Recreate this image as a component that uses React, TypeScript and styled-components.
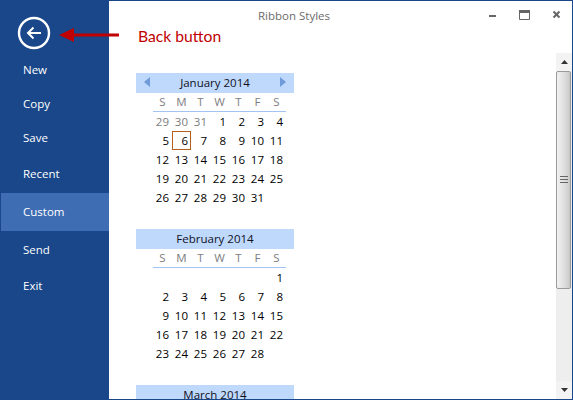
import * as React from 'react'
import styled, { createGlobalStyle } from 'styled-components'

const GlobalStyle = createGlobalStyle`
    html, body {
        margin: 0;
        padding: 0;
        background: #fff;
        overflow: hidden;
    }
`

const Window = styled.div`
    width: 573px;
    height: 400px;
    box-sizing: border-box;
    display: flex;
    overflow: hidden;
    position: relative;
    background: #fff;
    border: 1px solid #19478a;
    border-left: none;
    font-family: 'Open Sans', 'Noto Sans', sans-serif;
    font-size: 11.5px;
`

const Sidebar = styled.nav`
    width: 109px;
    flex: none;
    display: flex;
    flex-direction: column;
    background: #19478a;
    color: #fff;
`

const BackRow = styled.div`
    height: 51px;
    padding: 15px 0 0 17px;
    box-sizing: border-box;
    flex: none;
`

const NavItem = styled.div<{ $h: number; $active?: boolean }>`
    height: ${(p) => p.$h}px;
    box-sizing: border-box;
    flex: none;
    margin-left: 1px;
    padding-left: 22px;
    padding-bottom: ${(p) => (p.$active ? 2 : 0)}px;
    display: flex;
    align-items: center;
    background: ${(p) => (p.$active ? '#3f6db3' : 'transparent')};
`

const Main = styled.div`
    flex: 1;
    min-width: 0;
    display: flex;
    flex-direction: column;
`

const TitleBar = styled.div`
    height: 52px;
    flex: none;
    display: flex;
    align-items: flex-start;
    padding-left: 149px;
`

const Title = styled.div`
    padding-top: 7px;
    color: #6b6b6b;
`

const Caption = styled.div`
    margin-left: auto;
    display: flex;
    gap: 20px;
    padding: 8px 9px 0 0;
`

const CaptionButton = styled.svg`
    width: 12px;
    height: 12px;
    display: block;
`

const Annotation = styled.div`
    position: absolute;
    left: 59px;
    top: 24px;
    display: flex;
    align-items: center;
    gap: 19px;
    color: #c00000;
    font-family: Lato, 'Open Sans', sans-serif;
    font-size: 15.7px;
    line-height: 22px;
    svg {
        display: block;
    }
`

const Content = styled.div`
    flex: 1;
    min-height: 0;
    display: flex;
`

const Calendars = styled.div`
    flex: 1;
    padding: 20px 0 0 27px;
    display: flex;
    flex-direction: column;
    gap: 22px;
    overflow: hidden;
`

const Month = styled.section`
    width: 158px;
    flex: none;
`

const MonthHeader = styled.div`
    height: 20px;
    box-sizing: border-box;
    display: flex;
    align-items: center;
    justify-content: space-between;
    padding: 0 8px 2px;
    background: #bfd9fd;
    color: #10101c;
`

const MonthName = styled.span`
    flex: 1;
    text-align: center;
`

const Arrow = styled.svg`
    width: 6px;
    height: 10px;
    flex: none;
`

const Grid = styled.div`
    width: 133px;
    margin-left: 17px;
    display: grid;
    grid-template-columns: repeat(7, 19px);
    grid-auto-rows: 19px;
    line-height: 19px;
`

const WeekRow = styled(Grid)`
    height: 18px;
    grid-auto-rows: 18px;
    line-height: 18px;
    border-bottom: 1px solid #a3c4f2;
`

const WeekDay = styled.span`
    text-align: center;
    color: #7d7d7d;
`

const Day = styled.span<{ $muted?: boolean; $today?: boolean }>`
    text-align: right;
    padding-right: 3px;
    box-sizing: border-box;
    color: ${(p) => (p.$muted ? '#7d7d7d' : '#000')};
    ${(p) => p.$today && 'border: 1px solid #b5601e; line-height: 17px; padding-right: 2px;'}
`

const ScrollTrack = styled.div`
    width: 16px;
    flex: none;
    display: flex;
    flex-direction: column;
    background: #eeeeee;
`

const ScrollEnd = styled.div`
    flex: none;
    height: 18px;
    display: flex;
    align-items: center;
    justify-content: center;
    background: #f3f3f3;
`

const ScrollSpace = styled.div`
    flex: 1;
`

const Thumb = styled.div`
    flex: none;
    width: 15px;
    height: 218px;
    box-sizing: border-box;
    border: 1px solid #9a9a9a;
    border-radius: 2px;
    background: linear-gradient(to right, #f2f2f2, #dcdcdc 60%, #c8c8c8);
    display: flex;
    align-items: center;
    justify-content: center;
`

const Gripper = styled.svg`
    width: 8px;
    height: 8px;
    display: block;
`

const WEEK = ['S', 'M', 'T', 'W', 'T', 'F', 'S']
const NAV = [
    { label: 'New', h: 34 },
    { label: 'Copy', h: 34 },
    { label: 'Save', h: 34 },
    { label: 'Recent', h: 39 },
    { label: 'Custom', h: 38, active: true },
    { label: 'Send', h: 36 },
    { label: 'Exit', h: 36 }
]

type Cell = { n?: number; muted?: boolean; today?: boolean }

const range = (from: number, to: number, muted = false): Cell[] =>
    Array.from({ length: to - from + 1 }, (_, i) => ({ n: from + i, muted }))

const MONTHS: { name: string; arrows?: boolean; cells: Cell[] }[] = [
    {
        name: 'January 2014',
        arrows: true,
        cells: [...range(29, 31, true), ...range(1, 31)].map((c) =>
            c.n === 6 && !c.muted ? { ...c, today: true } : c
        )
    },
    {
        name: 'February 2014',
        cells: [...Array.from({ length: 6 }, () => ({})), ...range(1, 28)]
    },
    { name: 'March 2014', cells: [] }
]

const App: React.FC = () => (
    <Window>
        <GlobalStyle />
        <Sidebar>
            <BackRow>
                <svg width="34" height="34" viewBox="0 0 34 34">
                    <circle cx="17" cy="17" r="15" fill="none" stroke="#fff" strokeWidth="2.4" />
                    <path d="M24 17H11M16.5 11.5L11 17L16.5 22.5" fill="none" stroke="#fff" strokeWidth="2" />
                </svg>
            </BackRow>
            {NAV.map((item) => (
                <NavItem key={item.label} $h={item.h} $active={item.active}>
                    {item.label}
                </NavItem>
            ))}
        </Sidebar>
        <Main>
            <TitleBar>
                <Title>Ribbon Styles</Title>
                <Caption>
                    <CaptionButton viewBox="0 0 12 12">
                        <rect x="2" y="6" width="7" height="2" fill="#666" />
                    </CaptionButton>
                    <CaptionButton viewBox="0 0 12 12">
                        <path d="M0.5 1.5H10.5V10.5H0.5Z" fill="none" stroke="#666" />
                        <rect x="0" y="1" width="11" height="3" fill="#666" />
                    </CaptionButton>
                    <CaptionButton viewBox="0 0 12 12">
                        <path d="M2.5 2.5L8.5 8.5M8.5 2.5L2.5 8.5" fill="none" stroke="#666" strokeWidth="2" />
                    </CaptionButton>
                </Caption>
            </TitleBar>
            <Content>
                <Calendars>
                    {MONTHS.map((month) => (
                        <Month key={month.name}>
                            <MonthHeader>
                                {month.arrows && (
                                    <Arrow viewBox="0 0 6 10">
                                        <path d="M6 0V10L0 5Z" fill="#6f9bd8" />
                                    </Arrow>
                                )}
                                <MonthName>{month.name}</MonthName>
                                {month.arrows && (
                                    <Arrow viewBox="0 0 6 10">
                                        <path d="M0 0V10L6 5Z" fill="#6f9bd8" />
                                    </Arrow>
                                )}
                            </MonthHeader>
                            {month.cells.length > 0 && (
                                <>
                                    <WeekRow>
                                        {WEEK.map((d, i) => (
                                            <WeekDay key={i}>{d}</WeekDay>
                                        ))}
                                    </WeekRow>
                                    <Grid>
                                        {month.cells.map((c, i) => (
                                            <Day key={i} $muted={c.muted} $today={c.today}>
                                                {c.n}
                                            </Day>
                                        ))}
                                    </Grid>
                                </>
                            )}
                        </Month>
                    ))}
                </Calendars>
                <ScrollTrack>
                    <ScrollEnd>
                        <svg width="7" height="4" viewBox="0 0 7 4">
                            <path d="M3.5 0L7 4H0Z" fill="#333" />
                        </svg>
                    </ScrollEnd>
                    <Thumb>
                        <Gripper viewBox="0 0 8 8">
                            <path d="M0 0.5H8M0 3.5H8M0 6.5H8" stroke="#666" />
                        </Gripper>
                    </Thumb>
                    <ScrollSpace />
                    <ScrollEnd>
                        <svg width="7" height="4" viewBox="0 0 7 4">
                            <path d="M0 0H7L3.5 4Z" fill="#333" />
                        </svg>
                    </ScrollEnd>
                </ScrollTrack>
            </Content>
        </Main>
        <Annotation>
            <svg width="60" height="16" viewBox="0 0 60 16">
                <path d="M0 7L15 0V5.5H60V8.5H15V14Z" fill="#c00000" />
            </svg>
            Back button
        </Annotation>
    </Window>
)

export default App
